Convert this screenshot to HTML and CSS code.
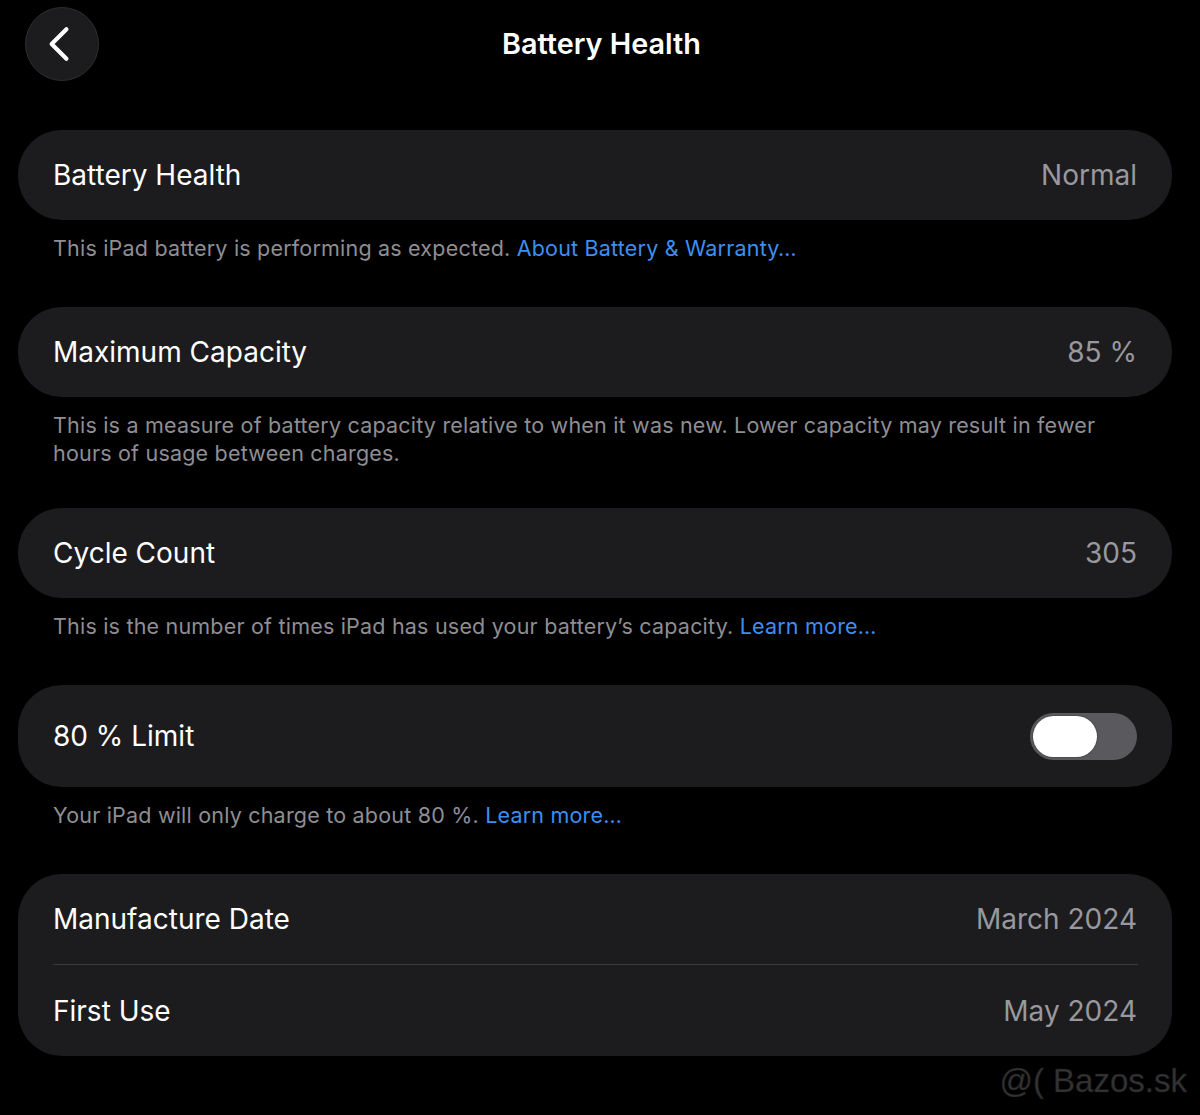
FILE: index.html
```html
<!DOCTYPE html>
<html lang="en">
<head>
<meta charset="utf-8">
<title>Battery Health</title>
<link rel="stylesheet" href="styles.css">
</head>
<body>
<div class="page">
  <header class="nav">
    <button class="back" aria-label="Back">
      <svg width="74" height="74" viewBox="0 0 74 74"><path d="M42 22 L27 37 L42 52" fill="none" stroke="#fff" stroke-width="4.2" stroke-linecap="round" stroke-linejoin="round"/></svg>
    </button>
    <h1 class="title">Battery Health</h1>
  </header>

  <section class="group">
    <div class="card">
      <div class="row"><span class="label">Battery Health</span><span class="value">Normal</span></div>
    </div>
    <p class="footer">This iPad battery is performing as expected. <a class="link">About Battery &amp; Warranty…</a></p>
  </section>

  <section class="group">
    <div class="card">
      <div class="row"><span class="label">Maximum Capacity</span><span class="value">85 %</span></div>
    </div>
    <p class="footer footer-multi">This is a measure of battery capacity relative to when it was new. Lower capacity may result in fewer hours of usage between charges.</p>
  </section>

  <section class="group">
    <div class="card">
      <div class="row"><span class="label">Cycle Count</span><span class="value">305</span></div>
    </div>
    <p class="footer">This is the number of times iPad has used your battery’s capacity. <a class="link">Learn more…</a></p>
  </section>

  <section class="group">
    <div class="card">
      <div class="row row-tall"><span class="label">80 % Limit</span><span class="toggle"><span class="knob"></span></span></div>
    </div>
    <p class="footer">Your iPad will only charge to about 80 %. <a class="link">Learn more…</a></p>
  </section>

  <section class="group">
    <div class="card">
      <div class="row"><span class="label">Manufacture Date</span><span class="value">March 2024</span></div>
      <div class="divider"></div>
      <div class="row row-last"><span class="label">First Use</span><span class="value">May 2024</span></div>
    </div>
  </section>

  <div class="watermark">@( Bazos.sk</div>
</div>
</body>
</html>
```

FILE: styles.css
```css
* { box-sizing: border-box; }
html, body {
  margin: 0;
  padding: 0;
  background: #000;
}
body {
  font-family: Inter, "Open Sans", "Liberation Sans", sans-serif;
  color: #fff;
  width: 1200px;
  height: 1115px;
  overflow: hidden;
}
.page {
  position: relative;
  height: 1115px;
  padding: 7px 28px 0 18px;
}
.nav {
  position: relative;
  height: 123px;
  display: flex;
  align-items: flex-start;
  justify-content: center;
}
.back {
  position: absolute;
  left: 7px;
  top: 0;
  width: 74px;
  height: 74px;
  border-radius: 50%;
  background: #1c1c1e;
  border: 1px solid #2e2e30;
  padding: 0;
  display: flex;
  align-items: center;
  justify-content: center;
}
.back svg { display: block; margin-left: -1px; margin-top: -1px; }
.title {
  margin: 0;
  height: 74px;
  line-height: 74px;
  font-size: 28.8px;
  font-weight: 600;
  letter-spacing: 0;
  margin-left: 13px;
}
.group { margin: 0; }
.card {
  background: #1c1c1e;
  border-radius: 44px;
}
.row {
  height: 90px;
  padding: 0 35px;
  display: flex;
  align-items: center;
  justify-content: space-between;
}
.row-tall { height: 102px; }
.row-last { height: 91px; }
.label {
  font-size: 28px;
  font-weight: 400;
  color: #fff;
  letter-spacing: 0;
}
.value {
  font-size: 28px;
  color: #98989e;
  letter-spacing: 0;
}
.divider {
  height: 1px;
  background: #3a3a3c;
  margin: 0 34px 0 35px;
}
.footer {
  margin: 0;
  padding: 14px 60px 45px 35px;
  font-size: 21.5px;
  line-height: 28px;
  color: #8e8e93;
  letter-spacing: 0.2px;
}
.footer-multi { padding-bottom: 41px; }
.link { color: #3d8ef2; }
.toggle {
  width: 107px;
  height: 47px;
  border-radius: 24px;
  background: #5a5a5e;
  display: flex;
  align-items: center;
  padding-left: 3px;
}
.knob {
  width: 64px;
  height: 41px;
  border-radius: 21px;
  background: #fff;
  box-shadow: 0 0 2px rgba(0,0,0,0.5);
}
.watermark {
  position: absolute;
  right: 13px;
  top: 1062px;
  font-family: "Liberation Sans", Arial, sans-serif;
  font-size: 33px;
  color: #343434;
  -webkit-text-stroke: 0.6px #1a1a1a;
  letter-spacing: 0;
}
```
